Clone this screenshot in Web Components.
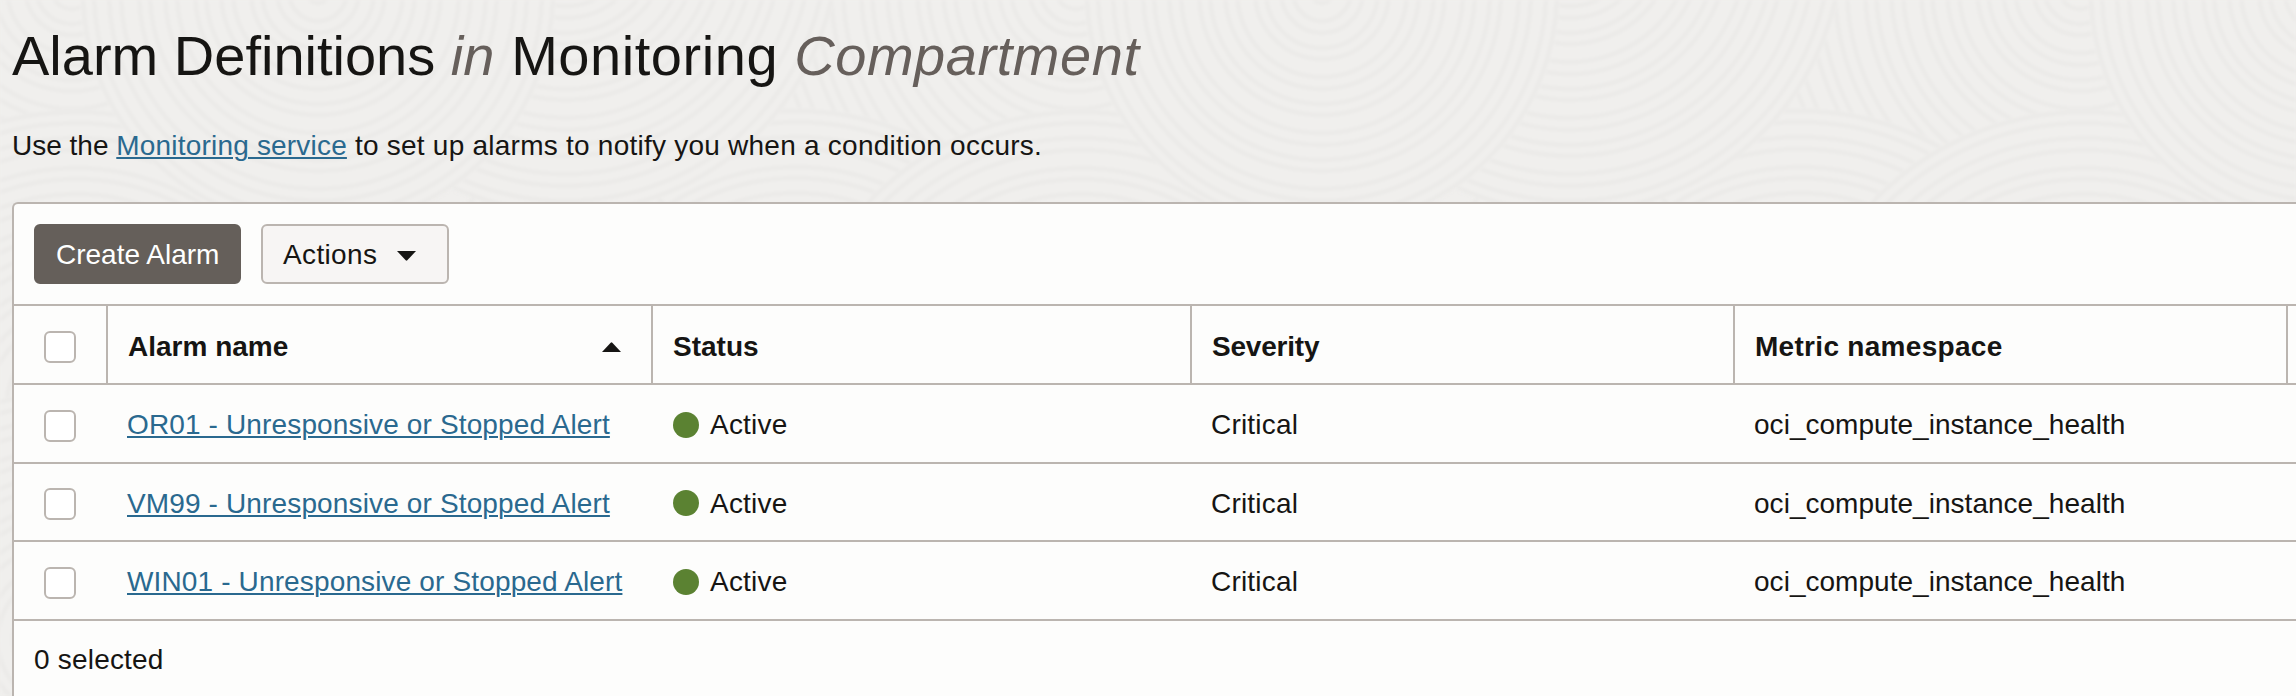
<!DOCTYPE html>
<html lang="en">
<head>
<meta charset="utf-8">
<title>Alarm Definitions</title>
<style>
html, body { margin: 0; height: 100%; overflow: hidden; }
body {
  --line: #bbb5b0; --ink: #161513; --muted: #665f5b; --link: #2a698f; --panel: #fdfdfc;
  font: 28px/31px "Liberation Sans", Arial, sans-serif; color: var(--ink); background: #f0efed;
}
</style>
</head>
<body>
<alarm-page></alarm-page>
<script>
const define = (name, html, setup) => {
  const tpl = document.createElement('template');
  tpl.innerHTML = html;
  customElements.define(name, class extends HTMLElement {
    connectedCallback() {
      if (this.shadowRoot) return;
      const root = this.attachShadow({ mode: 'open' });
      root.append(tpl.content.cloneNode(true));
      if (setup) setup(this, root);
    }
  });
};

/* Rippled paper texture: overlapping discs of concentric rings. */
define('ripple-backdrop', `
<style>
:host { display: block; position: absolute; inset: 0; z-index: -1; overflow: hidden; }
svg { display: block; filter: blur(1.6px); }
</style><svg width="2296" height="696" viewBox="0 0 2296 696"></svg>`, (el, root) => {
  const discs = [];
  for (const o of [-1004, 0, 1004, 2008]) {
    discs.push([o + 1076, -12, 330], [o + 796, 400, 292], [o + 1080, 405, 296],
      [o + 566, 300, 140], [o + 566, -60, 275], [o + 318, -8, 238],
      [o + 66, 640, 250], [o + 320, 660, 230]);
  }
  root.querySelector('svg').innerHTML = discs.map(([x, y, R]) => {
    let s = `<circle cx="${x}" cy="${y}" r="${R}" fill="#f0efed"/>`;
    for (let r = R - 3, i = 0; r > 8; i++) {
      s += `<circle cx="${x}" cy="${y}" r="${r}" fill="none" stroke="#ebeae8" stroke-width="4"/>`;
      r -= [11, 15, 12, 18][i % 4];
    }
    return s;
  }).join('');
});

define('page-heading', `
<style>
:host { display: block; }
h1 { margin: 0; font: 400 56px/63px "Liberation Sans", Arial, sans-serif; white-space: pre; }
em { color: var(--muted); }
.w { letter-spacing: .55px; margin-left: 1.2px; }
</style><h1>Alarm Definitions <em>in</em> <span class="w">Monitoring <em>Compartment</em></span></h1>`);

define('text-link', `<style>
:host { display: inline; }
a { color: var(--link); text-decoration: underline; text-decoration-thickness: 2px; text-underline-offset: 2px; }
</style><a href="#"><slot></slot></a>`);

define('page-intro', `
<style>
:host { display: block; }
p { margin: 0; white-space: nowrap; }
text-link { letter-spacing: .19px; }
span { letter-spacing: .24px; }
</style><p>Use the <text-link>Monitoring service</text-link><span> to set up alarms to notify you when a condition occurs.</span></p>`);

define('tool-button', `
<style>
:host { display: flex; box-sizing: border-box; height: 60px; padding: 13px 20px 0; border: 2px solid var(--line);
  border-radius: 6px; background: #f7f5f4; white-space: nowrap; }
:host([primary]) { background: #655f5a; border-color: #655f5a; color: #fff; }
:host(:not([primary])) { letter-spacing: .35px; }
</style><slot></slot>`);

define('arrow-icon', `
<style>
:host { display: block; width: 19px; height: 10px; }
svg { display: block; fill: var(--ink); }
:host([up]) svg { transform: scaleY(-1); }
</style><svg width="19" height="10" viewBox="0 0 19 10"><path d="M0 0H19L10.3 9.3Q9.5 10 8.7 9.3Z"/></svg>`);

define('check-box', `
<style>
:host { display: block; box-sizing: border-box; width: 32px; height: 32px; border: 2px solid var(--line); border-radius: 6px; background: #fff; }
</style>`);

const GRID = 'display: grid; grid-template-columns: 94px 545px 539px 543px 553px 1fr; box-sizing: border-box; border-bottom: 2px solid var(--line);';

define('table-head', `
<style>
:host { ${GRID} height: 79px; font-weight: 700; }
div { box-sizing: border-box; border-right: 2px solid var(--line); padding: 25px 0 0 20px; display: flex; }
.pick { padding-left: 30px; }
.rest { border: 0; }
.sort { justify-content: space-between; padding-right: 30px; }
.severity { letter-spacing: -.2px; }
.namespace { letter-spacing: .3px; }
arrow-icon { margin-top: 11px; }
</style>
<div class="pick"><check-box></check-box></div>
<div class="sort">Alarm name<arrow-icon up></arrow-icon></div>
<div>Status</div>
<div class="severity">Severity</div>
<div class="namespace">Metric namespace</div>
<div class="rest"></div>`);

define('alarm-row', `
<style>
:host { ${GRID} height: 79px; }
:host([short]) { height: 78px; }
div { padding: 24px 0 0 19px; white-space: nowrap; }
.c { padding: 25px 0 0 30px; }
:host([short]) .c { padding-top: 24px; }
.s { display: flex; padding-left: 20px; letter-spacing: .2px; }
i { width: 26px; height: 26px; border-radius: 50%; background: #5b8232; margin: 3px 11px 0 0; }
:host([short]) i { margin-top: 2px; }
.v { letter-spacing: .2px; }
.n { letter-spacing: .03px; }
.l { letter-spacing: .14px; }
</style>
<div class="c"><check-box></check-box></div>
<div class="l"><text-link><slot></slot></text-link></div>
<div class="s"><i></i>Active</div>
<div class="v">Critical</div>
<div class="n">oci_compute_instance_health</div>`);

define('alarm-panel', `
<style>
:host { display: flex; flex-direction: column; box-sizing: border-box; border: 2px solid var(--line); border-width: 2px 0 0 2px;
  border-top-left-radius: 6px; background: var(--panel); }
.bar { display: flex; gap: 20px; box-sizing: border-box; height: 102px; padding: 20px; border-bottom: 2px solid var(--line); }
.create { width: 207px; }
.actions { width: 188px; }
.actions arrow-icon { margin: 12px 0 0 20px; }
footer { padding: 23px 0 0 20px; letter-spacing: .2px; }
</style>
<div class="bar">
<tool-button primary class="create">Create Alarm</tool-button>
<tool-button class="actions">Actions<arrow-icon></arrow-icon></tool-button>
</div>
<table-head></table-head>
<alarm-row>OR01 - Unresponsive or Stopped Alert</alarm-row>
<alarm-row short>VM99 - Unresponsive or Stopped Alert</alarm-row>
<alarm-row>WIN01 - Unresponsive or Stopped Alert</alarm-row>
<footer>0 selected</footer>`);

define('alarm-page', `
<style>
:host { display: flex; flex-direction: column; box-sizing: border-box; height: 100vh; padding: 24px 0 0 12px; position: relative; z-index: 0; }
page-intro { margin: 43px 0 41px; }
alarm-panel { flex: 1; }
</style>
<ripple-backdrop></ripple-backdrop>
<page-heading></page-heading>
<page-intro></page-intro>
<alarm-panel></alarm-panel>`);
</script>
</body>
</html>
